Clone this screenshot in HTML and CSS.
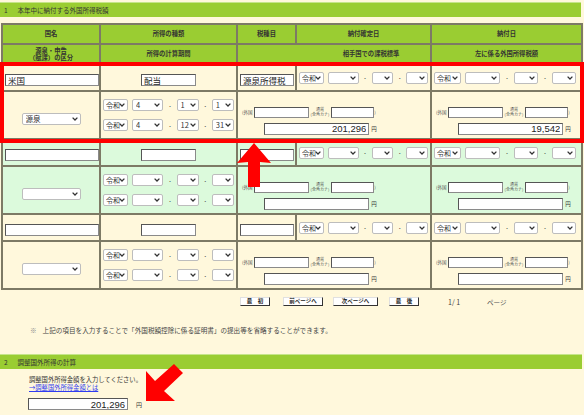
FILE: index.html
```html
<!DOCTYPE html>
<html lang="ja">
<head>
  <meta charset="UTF-8">
  <title>外国所得税額の入力</title>
  <link rel="stylesheet" href="styles.css">
</head>
<body>
  <!-- 1 本年中に納付する外国所得税額 -->
  <div class="bar"><span class="no">1</span>本年中に納付する外国所得税額</div>

  <table class="tax">
    <colgroup>
      <col class="c1"><col class="c2"><col class="c3"><col class="c4"><col class="c5">
    </colgroup>
    <tr class="head">
      <th>国名</th>
      <th>所得の種類</th>
      <th>税種目</th>
      <th>納付確定日</th>
      <th>納付日</th>
    </tr>
    <tr class="head">
      <th>源泉・申告<br>（賦課）の区分</th>
      <th>所得の計算期間</th>
      <th colspan="2" class="base-head">相手国での課税標準</th>
      <th>左に係る外国所得税額</th>
    </tr>

    <!-- record 1 -->
    <tr class="rec a">
      <td><input class="txt country" value="米国"></td>
      <td class="mid"><input class="txt kind" value="配当"></td>
      <td><input class="txt item" value="源泉所得税"></td>
      <td>
        <div class="date">
          <select class="era"><option>令和</option></select>
          <select class="yy"><option></option></select><span class="dot">・</span>
          <select class="md"><option></option></select><span class="dot">・</span>
          <select class="md"><option></option></select>
        </div>
      </td>
      <td>
        <div class="date">
          <select class="era"><option>令和</option></select>
          <select class="yy"><option></option></select><span class="dot">・</span>
          <select class="md"><option></option></select><span class="dot">・</span>
          <select class="md"><option></option></select>
        </div>
      </td>
    </tr>
    <tr class="rec b">
      <td class="mid"><select class="kbn"><option>源泉</option></select></td>
      <td>
        <div class="date">
          <select class="era"><option>令和</option></select>
          <select class="yy"><option>4</option></select><span class="dot">・</span>
          <select class="md"><option>1</option></select><span class="dot">・</span>
          <select class="md"><option>1</option></select>
        </div>
        <div class="date">
          <select class="era"><option>令和</option></select>
          <select class="yy"><option>4</option></select><span class="dot">・</span>
          <select class="md"><option>12</option></select><span class="dot">・</span>
          <select class="md"><option>31</option></select>
        </div>
      </td>
      <td colspan="2">
        <div class="money">
          <div class="cur"><span class="lbl">(外国</span><input class="txt cname"><span class="lbl2">通貨<br>(全角カナ)</span><input class="txt kana"><span class="lbl">)</span></div>
          <div class="amt"><input class="txt yen-in" value="201,296"><span class="yen">円</span></div>
        </div>
      </td>
      <td>
        <div class="money">
          <div class="cur"><span class="lbl">(外国</span><input class="txt cname"><span class="lbl2">通貨<br>(全角カナ)</span><input class="txt kana"><span class="lbl">)</span></div>
          <div class="amt"><input class="txt yen-in" value="19,542"><span class="yen">円</span></div>
        </div>
      </td>
    </tr>

    <!-- record 2 -->
    <tr class="rec alt a">
      <td><input class="txt country"></td>
      <td class="mid"><input class="txt kind"></td>
      <td><input class="txt item"></td>
      <td>
        <div class="date">
          <select class="era"><option>令和</option></select>
          <select class="yy"><option></option></select><span class="dot">・</span>
          <select class="md"><option></option></select><span class="dot">・</span>
          <select class="md"><option></option></select>
        </div>
      </td>
      <td>
        <div class="date">
          <select class="era"><option>令和</option></select>
          <select class="yy"><option></option></select><span class="dot">・</span>
          <select class="md"><option></option></select><span class="dot">・</span>
          <select class="md"><option></option></select>
        </div>
      </td>
    </tr>
    <tr class="rec alt b">
      <td class="mid"><select class="kbn"><option></option></select></td>
      <td>
        <div class="date">
          <select class="era"><option>令和</option></select>
          <select class="yy"><option></option></select><span class="dot">・</span>
          <select class="md"><option></option></select><span class="dot">・</span>
          <select class="md"><option></option></select>
        </div>
        <div class="date">
          <select class="era"><option>令和</option></select>
          <select class="yy"><option></option></select><span class="dot">・</span>
          <select class="md"><option></option></select><span class="dot">・</span>
          <select class="md"><option></option></select>
        </div>
      </td>
      <td colspan="2">
        <div class="money">
          <div class="cur"><span class="lbl">(外国</span><input class="txt cname"><span class="lbl2">通貨<br>(全角カナ)</span><input class="txt kana"><span class="lbl">)</span></div>
          <div class="amt"><input class="txt yen-in"><span class="yen">円</span></div>
        </div>
      </td>
      <td>
        <div class="money">
          <div class="cur"><span class="lbl">(外国</span><input class="txt cname"><span class="lbl2">通貨<br>(全角カナ)</span><input class="txt kana"><span class="lbl">)</span></div>
          <div class="amt"><input class="txt yen-in"><span class="yen">円</span></div>
        </div>
      </td>
    </tr>

    <!-- record 3 -->
    <tr class="rec a">
      <td><input class="txt country"></td>
      <td class="mid"><input class="txt kind"></td>
      <td><input class="txt item"></td>
      <td>
        <div class="date">
          <select class="era"><option>令和</option></select>
          <select class="yy"><option></option></select><span class="dot">・</span>
          <select class="md"><option></option></select><span class="dot">・</span>
          <select class="md"><option></option></select>
        </div>
      </td>
      <td>
        <div class="date">
          <select class="era"><option>令和</option></select>
          <select class="yy"><option></option></select><span class="dot">・</span>
          <select class="md"><option></option></select><span class="dot">・</span>
          <select class="md"><option></option></select>
        </div>
      </td>
    </tr>
    <tr class="rec b">
      <td class="mid"><select class="kbn"><option></option></select></td>
      <td>
        <div class="date">
          <select class="era"><option>令和</option></select>
          <select class="yy"><option></option></select><span class="dot">・</span>
          <select class="md"><option></option></select><span class="dot">・</span>
          <select class="md"><option></option></select>
        </div>
        <div class="date">
          <select class="era"><option>令和</option></select>
          <select class="yy"><option></option></select><span class="dot">・</span>
          <select class="md"><option></option></select><span class="dot">・</span>
          <select class="md"><option></option></select>
        </div>
      </td>
      <td colspan="2">
        <div class="money">
          <div class="cur"><span class="lbl">(外国</span><input class="txt cname"><span class="lbl2">通貨<br>(全角カナ)</span><input class="txt kana"><span class="lbl">)</span></div>
          <div class="amt"><input class="txt yen-in"><span class="yen">円</span></div>
        </div>
      </td>
      <td>
        <div class="money">
          <div class="cur"><span class="lbl">(外国</span><input class="txt cname"><span class="lbl2">通貨<br>(全角カナ)</span><input class="txt kana"><span class="lbl">)</span></div>
          <div class="amt"><input class="txt yen-in"><span class="yen">円</span></div>
        </div>
      </td>
    </tr>
  </table>

  <!-- Pager -->
  <div class="pager">
    <button class="pg first">最　初</button>
    <button class="pg prev">前ページへ</button>
    <button class="pg next">次ページへ</button>
    <button class="pg last">最　後</button>
    <span class="count">1/ 1</span>
    <span class="page">ページ</span>
  </div>

  <p class="note"><span class="mark">※</span>上記の項目を入力することで「外国税額控除に係る証明書」の提出等を省略することができます。</p>

  <!-- 2 調整国外所得の計算 -->
  <div class="bar bar2"><span class="no">2</span>調整国外所得の計算</div>
  <div class="adjust">
    <p class="msg">調整国外所得金額を入力してください。</p>
    <a href="#" class="help">→調整国外所得金額とは</a>
    <div class="adj-row"><input class="txt adj-in" value="201,296"><span class="yen">円</span></div>
  </div>

  <!-- annotations -->
  <div class="hl"></div>
  <svg class="arrow up" width="40" height="46" viewBox="0 0 40 46">
    <polygon points="18,0 35,20 24,19 24,44 12,44 12,19 1,20" fill="#f00"/>
  </svg>
  <svg class="arrow down" width="42" height="44" viewBox="0 0 42 44">
    <polygon points="2,37 2,7 11,17 30,0 39,9 20,27 31,37" fill="#f00"/>
  </svg>
</body>
</html>
```

FILE: styles.css
```css
* {
  box-sizing: border-box;
}
body {
  margin: 0;
  width: 584px;
  position: relative;
  background: #fff8dc;
  color: #333;
  font-family: "Noto Sans CJK JP", sans-serif;
}
.bar {
  margin: 2px 3px 0 0;
  height: 15px;
  line-height: 15px;
  padding-left: 4px;
  background: #9acd32;
  border-top: 1px solid #c5e58a;
  font-size: 6.5px;
}
.bar .no {
  margin-right: 10px;
}
.tax {
  margin: 6px 0 0 1px;
  width: 580px;
  table-layout: fixed;
  border-collapse: collapse;
}
.c1 { width: 98px; }
.c2 { width: 137px; }
.c3 { width: 59px; }
.c4 { width: 135px; }
.c5 { width: 151px; }
.tax th, .tax td {
  border: 2px solid #7d7a65;
  padding: 0 2px;
}
.tax th {
  height: 20px;
  background: #9acd32;
  font-size: 6.3px;
  line-height: 7.5px;
  font-weight: bold;
}
.tax th.base-head {
  padding-left: 76px;
}
.rec td {
  background: #fff8dc;
}
.rec.alt td {
  background: #dcfadc;
}
.rec.a td {
  height: 27px;
}
.rec.b td {
  height: 48px;
}
.mid {
  text-align: center;
}
.txt {
  height: 12px;
  padding: 0 2px;
  border: 1px solid #8a8a8a;
  border-top-color: #555;
  border-left-color: #555;
  background: #fff;
  font-family: "Noto Sans CJK JP", sans-serif;
  font-size: 8.5px;
  color: #222;
  vertical-align: middle;
}
.country { width: 94px; }
.kind { width: 55px; }
.item { width: 54px; }
select {
  -webkit-appearance: none;
  appearance: none;
  height: 12px;
  padding: 0 7px 0 3px;
  border: 1px solid #bdbdbd;
  border-radius: 2px;
  background: #fff url("data:image/svg+xml,%3Csvg xmlns='http://www.w3.org/2000/svg' width='6' height='4' viewBox='0 0 6 4'%3E%3Cpath d='M0.6 0.6 L3 3 L5.4 0.6' fill='none' stroke='%23333' stroke-width='1.3'/%3E%3C/svg%3E") no-repeat right 2px center;
  font-family: "Noto Sans CJK JP", sans-serif;
  font-size: 7.5px;
  line-height: 10px;
  color: #333;
}
.date {
  display: flex;
  align-items: center;
  gap: 4px;
}
.date + .date {
  margin-top: 8px;
}
.era {
  width: 27px;
  padding-left: 2px;
  font-size: 7px;
}
.yy { width: 35px; }
.md { width: 24px; }
.dot {
  font-size: 5px;
  width: 6px;
  text-align: center;
  color: #555;
}
.kbn {
  width: 59px;
  height: 12px;
}
.money {
  display: inline-flex;
  flex-direction: column;
  align-items: flex-end;
  padding-left: 2px;
}
.cur {
  display: flex;
  align-items: center;
}
.lbl {
  font-size: 4.5px;
  color: #555;
  margin-right: 1px;
}
.lbl2 {
  font-size: 4px;
  line-height: 5px;
  text-align: center;
  color: #555;
  margin: 0 2px;
}
.cname {
  width: 55px;
  height: 11px;
}
.kana {
  width: 43px;
  height: 11px;
}
.amt {
  display: flex;
  align-items: center;
  margin-top: 5px;
}
.yen-in {
  width: 105px;
  height: 12px;
  text-align: right;
  font-family: "Liberation Sans", Arial, sans-serif;
  font-size: 9.5px;
}
.yen {
  font-size: 5.5px;
  margin-left: 2px;
  color: #333;
}
.pager {
  display: flex;
  align-items: center;
  margin-top: 7px;
  padding-left: 240px;
  height: 9px;
}
.pg {
  height: 9px;
  padding: 0;
  border: 1px solid;
  border-color: #e0e0e0 #333 #333 #e0e0e0;
  background: #fff;
  font-family: "Noto Sans CJK JP", sans-serif;
  font-size: 5.5px;
  font-weight: bold;
  line-height: 7px;
  color: #222;
}
.first { width: 30px; }
.prev { width: 40px; margin-left: 13px; }
.next { width: 45px; margin-left: 10px; }
.last { width: 30px; margin-left: 11px; }
.count {
  margin-left: 29px;
  font-size: 7px;
  color: #444;
}
.page {
  margin-left: 27px;
  font-size: 6.5px;
  color: #555;
}
.note {
  margin: 19px 0 0 30px;
  font-size: 6.6px;
  line-height: 10px;
  color: #444;
}
.note .mark {
  margin-right: 6px;
  color: #888;
}
.bar2 {
  margin-top: 19px;
  margin-right: 2px;
}
.adjust {
  padding-left: 28px;
}
.msg {
  margin: 7px 0 0 1px;
  font-size: 6.3px;
  line-height: 8px;
  color: #333;
}
.help {
  display: block;
  margin-left: 1px;
  font-size: 6.3px;
  line-height: 8px;
  color: #2f3cf0;
}
.adj-row {
  display: flex;
  align-items: center;
  margin-top: 6px;
}
.adj-in {
  width: 100px;
  text-align: right;
  font-family: "Liberation Sans", Arial, sans-serif;
  font-size: 9.5px;
}
.adj-row .yen {
  margin-left: 8px;
  font-size: 6px;
}
.hl {
  position: absolute;
  left: 0;
  top: 62px;
  width: 584px;
  height: 81px;
  border: 4px solid #f00;
}
.arrow {
  position: absolute;
}
.arrow.up {
  left: 236px;
  top: 143px;
}
.arrow.down {
  left: 144px;
  top: 364px;
}
```
